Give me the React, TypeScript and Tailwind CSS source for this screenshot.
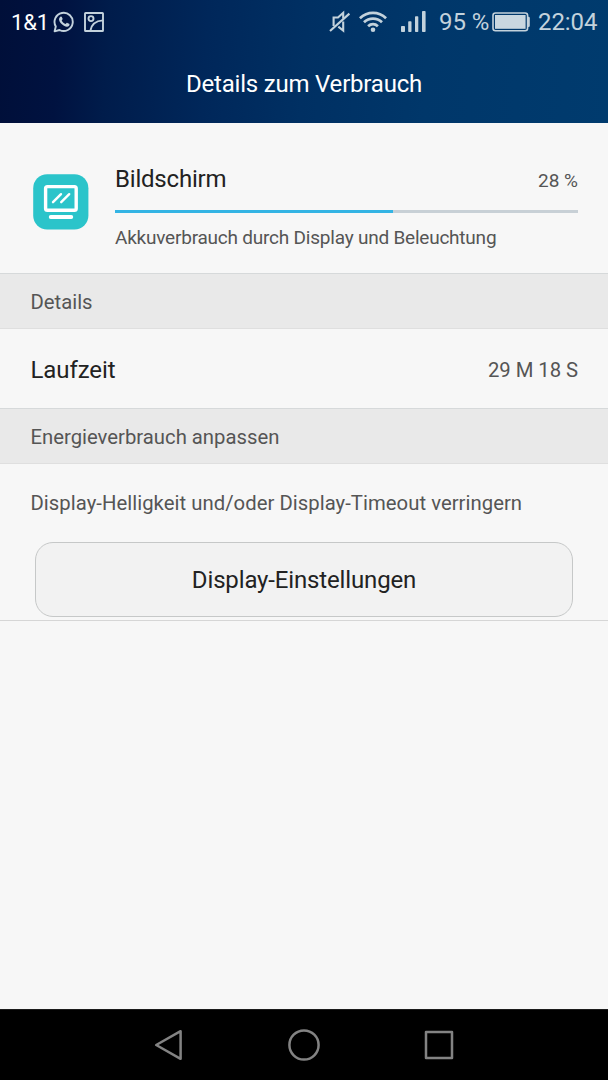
import type { ReactNode } from "react";

function WhatsAppIcon() {
    return (
        <svg className="ml-[5px] shrink-0" width="22" height="22" viewBox="0 0 22 22" fill="none">
            <path d="M1.6 20.3l1.2-4.8a9.1 9.1 0 1 1 3.7 3.5z" stroke="#c3d2dc" strokeWidth="1.9" strokeLinejoin="round" />
            <path d="M7.2 5.9c.7-.6 1.3-.5 1.6.1l.8 1.8c.2.5-.5 1.1-.9 1.6.9 1.7 2.2 2.9 4 3.7.6-.6 1-1.4 1.6-1.2l1.9.9c.6.4.3 1.3-.1 1.9-1.2 1.5-3 1.3-5.2.1-2.3-1.3-4.3-3.5-4.8-5.7-.2-1.3.3-2.5 1.1-3.2z" fill="#c3d2dc" />
        </svg>
    );
}

function PictureIcon() {
    return (
        <svg className="ml-[9px] shrink-0" width="20" height="20" viewBox="0 0 20 20" fill="none" stroke="#c3d2dc" strokeWidth="1.9">
            <rect x="1" y="1" width="18" height="18" rx="0.6" />
            <circle cx="7" cy="6.6" r="2.5" />
            <path d="M6.3 19C7.2 13 11.5 8.9 19 8.4" />
        </svg>
    );
}

function MuteIcon() {
    return (
        <svg className="shrink-0" width="22" height="24" viewBox="0 0 22 24" fill="none" stroke="#c3d2dc" strokeWidth="2.1">
            <path d="M4.6 16V7.5H9L14.2 2.8V8.6M14.2 11.5V20.6L9.3 16.6" />
            <path d="M1 21L20.4 3.6" />
        </svg>
    );
}

function WifiIcon() {
    return (
        <svg className="ml-[8px] shrink-0" width="28" height="22" viewBox="0 0 28 22" fill="none" stroke="#c3d2dc" strokeWidth="2.8">
            <path d="M0.9 7.2C8.4 0.2 19.6 0.2 27.1 7.2" />
            <path d="M5 11.3C10.2 6.5 17.8 6.5 23 11.3" />
            <path d="M9.1 15.2C12 12.6 16 12.6 18.9 15.2" />
            <circle cx="14" cy="18.8" r="2.3" fill="#c3d2dc" stroke="none" />
        </svg>
    );
}

function SignalIcon() {
    return (
        <svg className="ml-[14px] shrink-0" width="25" height="22" viewBox="0 0 25 22" fill="#c3d2dc">
            <rect x="0" y="15" width="4" height="6" rx="0.8" />
            <rect x="7.2" y="10.3" width="3.3" height="10.7" rx="0.8" />
            <rect x="14" y="5.3" width="3.3" height="15.7" rx="0.8" />
            <rect x="21" y="0" width="3.6" height="21" rx="0.8" />
        </svg>
    );
}

function BatteryIcon() {
    return (
        <svg className="shrink-0" width="38" height="20" viewBox="0 0 38 20" fill="none">
            <rect x="1" y="1" width="34.6" height="17.8" rx="2.5" stroke="#c3d2dc" strokeWidth="1.6" />
            <rect x="3" y="3" width="30.6" height="13.8" fill="#c9d7e0" />
            <path d="M36 4.8h.6a1.2 1.2 0 0 1 1.2 1.2v7.800a1.2 1.2 0 0 1-1.2 1.2h-.6z" fill="#c3d2dc" />
        </svg>
    );
}

function ScreenIcon() {
    return (
        <svg className="mt-[51px] ml-[33px] shrink-0" width="56" height="56" viewBox="0 0 56 56" fill="none">
            <rect x="0.2" y="0.2" width="55.2" height="55.4" rx="14" fill="#2bc4ca" />
            <rect x="12.6" y="12.6" width="30.6" height="23.6" rx="1.8" stroke="#fff" strokeWidth="3.4" />
            <path d="M20 28.2L28 20.2M28.2 28.2L36.2 20.2" stroke="#fff" strokeWidth="2.4" strokeLinecap="round" />
            <path d="M17.7 43H38.3" stroke="#fff" strokeWidth="3.8" strokeLinecap="round" />
        </svg>
    );
}

function SectionHeader({ children }: { children: ReactNode }) {
    return (
        <div className="h-14 shrink-0 bg-[#e9e9e9] border-y border-t-[#d6d9da] border-b-[#dfdfdf] pl-[30.5px] pt-[3px] flex items-center text-[20.3px] text-[#555]">
            {children}
        </div>
    );
}

function StatusBar() {
    return (
        <div className="h-11 flex items-center justify-between pl-[11px] text-[#c3d2dc]">
            <div className="flex items-center">
                <span className="w-[37px] text-[22px] tracking-[-0.2px] text-white whitespace-nowrap">1&amp;1</span>
                <WhatsAppIcon />
                <PictureIcon />
            </div>
            <div className="w-[279px] flex items-center text-[24px] tracking-[-0.1px] whitespace-nowrap">
                <MuteIcon />
                <WifiIcon />
                <SignalIcon />
                <span className="ml-[13px] w-[53px]">95 %</span>
                <BatteryIcon />
                <span className="ml-[8px]">22:04</span>
            </div>
        </div>
    );
}

function NavBar() {
    return (
        <div className="h-[71px] shrink-0 bg-black border-t border-[#1c1c1c] flex items-center justify-center gap-[103px]">
            <svg width="32" height="32" viewBox="0 0 32 32" fill="none" stroke="#838383" strokeWidth="2.5" strokeLinejoin="round">
                <path d="M3.2 16L27.6 2.2V29.8Z" />
            </svg>
            <svg width="32" height="32" viewBox="0 0 32 32" fill="none" stroke="#838383" strokeWidth="2.5">
                <circle cx="16" cy="16" r="14.6" />
            </svg>
            <svg width="32" height="32" viewBox="0 0 32 32" fill="none" stroke="#838383" strokeWidth="2.5" strokeLinejoin="round">
                <rect x="3" y="3" width="26" height="26" />
            </svg>
        </div>
    );
}

function App() {
    return (
        <div className="w-[608px] h-[1080px] flex flex-col bg-[#f7f7f7] font-['Roboto',sans-serif] overflow-hidden">
            <header className="h-[123px] shrink-0 bg-[linear-gradient(94deg,#000f39_0%,#001240_10%,#001c4b_18%,#00275a_34%,#003063_50%,#00376a_70%,#003b6e_100%)]">
                <StatusBar />
                <h1 className="h-20 text-center text-[24px] leading-[80px] tracking-[-0.2px] text-white">Details zum Verbrauch</h1>
            </header>

            <section className="h-[150px] shrink-0 flex">
                <ScreenIcon />
                <div className="ml-[26px] w-[463px] pt-[38px]">
                    <div className="h-9 flex items-center justify-between">
                        <span className="text-[24px] tracking-[-0.2px] text-[#222]">Bildschirm</span>
                        <span className="text-[19px] text-[#555] pt-1">28 %</span>
                    </div>
                    <div className="mt-[13px] h-[3px] bg-[#c8d0d6]">
                        <div className="h-full w-[60%] bg-[#34b4e4]" />
                    </div>
                    <p className="mt-[9px] text-[19px] leading-8 tracking-[-0.22px] text-[#555] whitespace-nowrap">Akkuverbrauch durch Display und Beleuchtung</p>
                </div>
            </section>

            <SectionHeader>Details</SectionHeader>
            <div className="h-[79px] shrink-0 flex items-center justify-between pl-[30.5px] pr-[30px] pt-[2px]">
                <span className="text-[24px] tracking-[-0.1px] text-[#222]">Laufzeit</span>
                <span className="pt-px text-[20.3px] tracking-[-0.05px] text-[#555]">29 M 18 S</span>
            </div>

            <SectionHeader>Energieverbrauch anpassen</SectionHeader>
            <div className="h-[157px] shrink-0 border-b border-[#d6d6d6] flex flex-col">
                <p className="h-[78px] pl-[30.5px] text-[20.3px] leading-[78px] tracking-[0.04px] text-[#555] whitespace-nowrap">
                    Display-Helligkeit und/oder Display-Timeout verringern
                </p>
                <button className="mx-[35px] h-[75px] rounded-[18px] border border-[#c6c8c8] bg-[#f2f2f2] text-[24px] tracking-[-0.15px] text-[#222]">
                    Display-Einstellungen
                </button>
            </div>

            <div className="grow" />
            <NavBar />
        </div>
    );
}

export default App;
